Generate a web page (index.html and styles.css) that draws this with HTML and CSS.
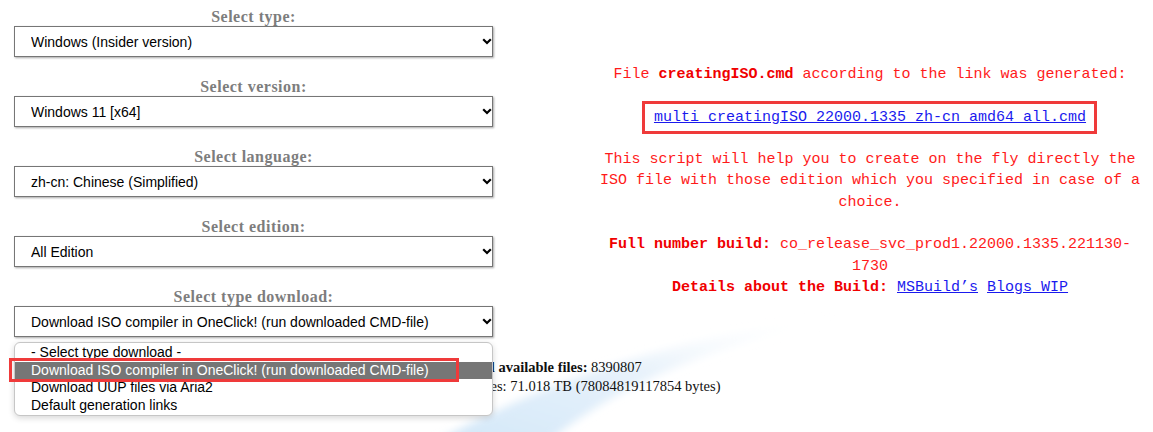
FILE: index.html
```html
<!DOCTYPE html>
<html lang="en">
<head>
<meta charset="utf-8">
<title>UUP download options</title>
<link rel="stylesheet" href="styles.css">
</head>
<body>
<svg class="backdrop" viewBox="0 0 1153 432" width="1153" height="432" aria-hidden="true">
  <defs>
    <linearGradient id="sw" x1="0" y1="1" x2="1" y2="0">
      <stop offset="0" stop-color="#d2e7f8"/>
      <stop offset="0.55" stop-color="#e8f2fb"/>
      <stop offset="1" stop-color="#ffffff" stop-opacity="0"/>
    </linearGradient>
    <filter id="bl" x="-20%" y="-20%" width="140%" height="140%"><feGaussianBlur stdDeviation="4"/></filter>
  </defs>
  <path d="M430 445 C 560 372 700 332 842 318 C 705 346 605 392 545 445 Z" fill="url(#sw)" filter="url(#bl)"/>
</svg>
<main class="page">
  <div class="columns">
    <form class="form-col">
      <div class="field">
        <label class="field-label" for="sel-type">Select type:</label>
        <div class="select-wrap">
          <select id="sel-type" class="select"><option>Windows (Insider version)</option></select>
          <svg class="chevron" viewBox="0 0 10 7"><path d="M1.2 1.2 5 5 8.8 1.2"/></svg>
        </div>
      </div>
      <div class="field">
        <label class="field-label" for="sel-version">Select version:</label>
        <div class="select-wrap">
          <select id="sel-version" class="select"><option>Windows 11 [x64]</option></select>
          <svg class="chevron" viewBox="0 0 10 7"><path d="M1.2 1.2 5 5 8.8 1.2"/></svg>
        </div>
      </div>
      <div class="field">
        <label class="field-label" for="sel-lang">Select language:</label>
        <div class="select-wrap">
          <select id="sel-lang" class="select"><option>zh-cn: Chinese (Simplified)</option></select>
          <svg class="chevron" viewBox="0 0 10 7"><path d="M1.2 1.2 5 5 8.8 1.2"/></svg>
        </div>
      </div>
      <div class="field">
        <label class="field-label" for="sel-edition">Select edition:</label>
        <div class="select-wrap">
          <select id="sel-edition" class="select"><option>All Edition</option></select>
          <svg class="chevron" viewBox="0 0 10 7"><path d="M1.2 1.2 5 5 8.8 1.2"/></svg>
        </div>
      </div>
      <div class="field">
        <label class="field-label" for="sel-dl">Select type download:</label>
        <div class="select-wrap">
          <select id="sel-dl" class="select"><option>Download ISO compiler in OneClick! (run downloaded CMD-file)</option></select>
          <svg class="chevron" viewBox="0 0 10 7"><path d="M1.2 1.2 5 5 8.8 1.2"/></svg>
          <ul class="dropdown">
            <li>- Select type download -</li>
            <li class="active">Download ISO compiler in OneClick! (run downloaded CMD-file)</li>
            <li>Download UUP files via Aria2</li>
            <li>Default generation links</li>
          </ul>
        </div>
      </div>
    </form>
    <section class="info-col">
      <p>File <b>creatingISO.cmd</b> according to the link was generated:</p>
      <p><span class="mark"><a href="#">multi_creatingISO_22000.1335_zh-cn_amd64_all.cmd</a></span></p>
      <p>This script will help you to create on the fly directly the ISO file with those edition which you specified in case of a choice.</p>
      <p><b>Full number build:</b> co_release_svc_prod1.22000.1335.221130-<br>1730<br><b>Details about the Build:</b> <a href="#">MSBuild’s</a> <a href="#">Blogs WIP</a></p>
    </section>
  </div>
  <div class="stats">
    <div><b>Total available files:</b> 8390807</div>
    <div>Total size of all files: 71.018 TB (78084819117854 bytes)</div>
  </div>
</main>
</body>
</html>
```
FILE: styles.css
```css
html, body {
  margin: 0;
  padding: 0;
  background: #ffffff;
}

body {
  position: relative;
  min-height: 432px;
  overflow: hidden;
  font-family: "Liberation Serif", serif;
  color: #111;
}

.backdrop {
  position: absolute;
  left: 0;
  top: 0;
  z-index: 0;
  pointer-events: none;
}

.page {
  position: relative;
  z-index: 1;
}

.columns {
  display: flex;
  align-items: flex-start;
}

.form-col {
  width: 479px;
  margin: 0 0 0 14px;
  padding-top: 5px;
  display: flex;
  flex-direction: column;
  gap: 18px;
}

.field-label {
  display: block;
  text-align: center;
  font-family: "Liberation Serif", serif;
  font-weight: bold;
  font-size: 16px;
  line-height: 19px;
  letter-spacing: 0.5px;
  color: #7d7d7d;
  padding-top: 2px;
  margin-bottom: 0;
}

.select-wrap {
  position: relative;
}

.select {
  appearance: none;
  -webkit-appearance: none;
  display: block;
  width: 100%;
  height: 31px;
  margin: 0;
  padding: 0 24px 0 16px;
  border: 1px solid #767676;
  border-radius: 0;
  background: #ffffff;
  box-shadow: 1px 1px 2px rgba(0, 0, 0, 0.35);
  font-family: "Liberation Sans", Arial, sans-serif;
  font-size: 14px;
  color: #000;
}

.chevron {
  position: absolute;
  right: 1px;
  top: 12px;
  width: 10px;
  height: 7px;
  fill: none;
  stroke: #000;
  stroke-width: 2.2;
  pointer-events: none;
}

.dropdown {
  position: absolute;
  z-index: 5;
  left: 0;
  right: 0;
  top: calc(100% + 5px);
  margin: 0;
  padding: 1px 0;
  list-style: none;
  background: #ffffff;
  border: 1px solid #c6c6c6;
  border-radius: 6px;
  box-shadow: 0 2px 6px rgba(0, 0, 0, 0.16);
  font-family: "Liberation Sans", Arial, sans-serif;
  font-size: 14px;
  line-height: 17.5px;
  color: #000;
}

.dropdown li {
  padding-left: 16px;
  height: 17.5px;
  white-space: nowrap;
}

.dropdown li.active {
  position: relative;
  background: #767676;
  color: #ffffff;
}

.dropdown li.active::after {
  content: "";
  position: absolute;
  left: -6px;
  right: 33px;
  top: -4px;
  bottom: -3px;
  border: 3px solid #ef3a3a;
}

.info-col {
  flex: 1;
  margin-left: 94px;
  padding-top: 64px;
  font-family: "Liberation Mono", monospace;
  font-size: 15px;
  line-height: 21.3px;
  color: #ff1a1a;
  text-align: center;
}

.info-col p {
  margin: 0 0 21.3px;
}

.info-col b {
  color: #f00000;
}

.info-col a {
  color: #1a1aee;
  text-decoration: underline;
}

.mark {
  position: relative;
}

.mark::after {
  content: "";
  position: absolute;
  left: -12px;
  right: -11px;
  top: -8px;
  bottom: -8px;
  border: 3px solid #ef3a3a;
}

.stats {
  margin-top: 21px;
  padding-right: 48px;
  text-align: center;
  font-family: "Liberation Serif", serif;
  font-size: 14.5px;
  line-height: 19px;
  color: #111;
}
```
